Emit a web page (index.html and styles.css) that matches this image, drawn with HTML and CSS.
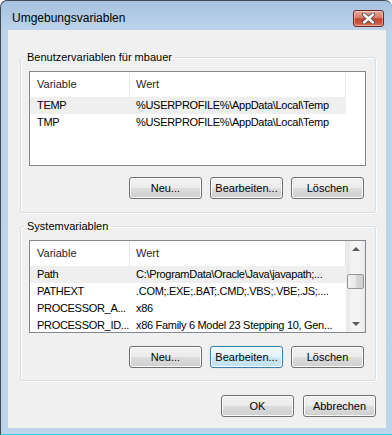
FILE: index.html
```html
<!DOCTYPE html>
<html lang="de">
<head>
  <meta charset="UTF-8">
  <title>Umgebungsvariablen</title>
  <link rel="stylesheet" href="styles.css">
</head>
<body>
  <div class="window">
    <div class="titlebar">
      <span class="title">Umgebungsvariablen</span>
      <button class="close" title="Schließen">
        <svg width="13" height="11" viewBox="0 0 13 11">
          <path d="M2 1.5 L11 9.5 M11 1.5 L2 9.5" stroke="#4a4a4a" stroke-width="4.2" stroke-linecap="round"/>
          <path d="M2 1.5 L11 9.5 M11 1.5 L2 9.5" stroke="#fff" stroke-width="2.4" stroke-linecap="round"/>
        </svg>
      </button>
    </div>

    <div class="client">
      <fieldset class="group first">
        <legend>Benutzervariablen für mbauer</legend>
        <div class="list user">
          <div class="cols">
            <div class="head">
              <span class="c1">Variable</span>
              <span class="c2">Wert</span>
            </div>
            <div class="row sel"><span class="c1">TEMP</span><span class="c2">%USERPROFILE%\AppData\Local\Temp</span></div>
            <div class="row"><span class="c1">TMP</span><span class="c2">%USERPROFILE%\AppData\Local\Temp</span></div>
          </div>
        </div>
        <div class="buttons">
          <button class="btn">Neu...</button>
          <button class="btn">Bearbeiten...</button>
          <button class="btn">Löschen</button>
        </div>
      </fieldset>

      <fieldset class="group second">
        <legend>Systemvariablen</legend>
        <div class="list system">
          <div class="cols">
            <div class="head">
              <span class="c1">Variable</span>
              <span class="c2">Wert</span>
            </div>
            <div class="row sel"><span class="c1">Path</span><span class="c2">C:\ProgramData\Oracle\Java\javapath;...</span></div>
            <div class="row"><span class="c1">PATHEXT</span><span class="c2">.COM;.EXE;.BAT;.CMD;.VBS;.VBE;.JS;....</span></div>
            <div class="row"><span class="c1">PROCESSOR_A...</span><span class="c2">x86</span></div>
            <div class="row"><span class="c1">PROCESSOR_ID...</span><span class="c2">x86 Family 6 Model 23 Stepping 10, Gen...</span></div>
          </div>
          <div class="scrollbar">
            <div class="arrow"><span class="up"></span></div>
            <div class="thumb"></div>
            <div class="track"></div>
            <div class="arrow"><span class="down"></span></div>
          </div>
        </div>
        <div class="buttons">
          <button class="btn">Neu...</button>
          <button class="btn focus">Bearbeiten...</button>
          <button class="btn">Löschen</button>
        </div>
      </fieldset>

      <div class="buttons dialog">
        <button class="btn">OK</button>
        <button class="btn">Abbrechen</button>
      </div>
    </div>
  </div>
</body>
</html>
```

FILE: styles.css
```css
body { margin: 0; background: #fff; font-family: "Liberation Sans", Arial, sans-serif; font-size: 11px; color: #000; }

.window {
  width: 392px; height: 435px; box-sizing: border-box;
  display: flex; flex-direction: column;
  padding: 0 6px 6px 7px;
  border-top: 1px solid #3f4a56; border-left: 1px solid #3f4a56; border-bottom: 1px solid #33ccee;
  border-radius: 7px 7px 0 0;
  background: linear-gradient(#a7c2df 0, #bcd3ea 30px, #bdd4eb);
}

.titlebar { height: 29px; display: flex; justify-content: space-between; align-items: flex-start; }
.title { margin: 10px 0 0 4px; font-size: 12px; line-height: 15px; color: #000; }
.close {
  margin: 9px 2px 0 0; width: 31px; height: 17px; padding: 0;
  display: flex; align-items: center; justify-content: center;
  border: 1px solid #6e2a22; border-radius: 3px;
  background: linear-gradient(#e9a899 0, #d67a68 45%, #c2432f 52%, #cd5c44 85%, #d9836c 100%);
  box-shadow: inset 0 0 0 1px rgba(255, 255, 255, 0.35);
}

.client {
  width: 378px; height: 398px; box-sizing: border-box;
  background: #f0f0f0; padding: 0 10px 0 12px;
  display: flex; flex-direction: column;
}

.group {
  margin: 0; padding: 0 0 13px; min-width: 0;
  border: 1px solid #d5dfe5; border-radius: 3px;
  box-shadow: inset 1px 1px 0 #fff, 1px 1px 0 #fff;
}
.group.first { margin-top: 20px; }
.group.second { margin-top: 6px; padding-bottom: 12px; }
.group legend { margin-left: 3px; padding: 0 3px; line-height: 14px; }

.list {
  margin: 7px 9px 0 8px; height: 95px; box-sizing: border-box;
  border: 1px solid #828790; background: #fff;
  display: flex; overflow: hidden;
  letter-spacing: -0.3px;
}
.list.system { height: 93px; }
.cols { flex: 1; min-width: 0; }

.head { display: flex; height: 25px; align-items: center; color: #1e1e1e; letter-spacing: 0; }
.head .c1 { border-right: 1px solid #e5e5e5; }
.head .c2 { border-right: 1px solid #e5e5e5; }
.head span { height: 25px; line-height: 25px; }

.c1 { width: 100px; box-sizing: border-box; padding-left: 7px; white-space: nowrap; overflow: hidden; }
.c2 { width: 216px; box-sizing: border-box; padding-left: 6px; white-space: nowrap; overflow: hidden; }

.row { display: flex; width: 316px; height: 17px; line-height: 17px; }
.row.sel { background: #efefef; }

.scrollbar {
  width: 18px; display: flex; flex-direction: column;
  background: linear-gradient(to right, #e6e6e6, #f4f4f4 30%, #f4f4f4 70%, #e9e9e9);
  border-left: 1px solid #ebebeb;
}
.arrow { height: 16px; display: flex; align-items: center; justify-content: center; }
.up { width: 0; height: 0; border-left: 4px solid transparent; border-right: 4px solid transparent; border-bottom: 4px solid #5a5a5a; }
.down { width: 0; height: 0; border-left: 4px solid transparent; border-right: 4px solid transparent; border-top: 4px solid #5a5a5a; }
.thumb {
  margin: 17px 1px 0 0; height: 15px; box-sizing: border-box;
  border: 1px solid #979797; border-radius: 2px;
  background: linear-gradient(to right, #f3f3f3, #e8e8e8 50%, #d8d8d8 51%, #d0d0d0);
}
.track { flex: 1; }

.buttons { display: flex; justify-content: flex-end; gap: 8px; margin: 11px 11px 0 0; }
.second .buttons { margin-top: 13px; }
.buttons.dialog { margin: 14px 0 0; gap: 9px; }

.btn {
  width: 73px; height: 22px; padding: 0;
  font-family: "Liberation Sans", Arial, sans-serif; font-size: 11px; color: #000;
  border: 1px solid #707070; border-radius: 3px;
  background: linear-gradient(#f2f2f2 0%, #ebebeb 50%, #dddddd 50%, #cfcfcf 100%);
  box-shadow: inset 0 0 0 1px #fcfcfc;
}
.btn.focus {
  border-color: #3c7fb1;
  background: linear-gradient(#f1f9fe 0%, #e2f2fc 50%, #cfe9fa 50%, #bfe0f6 100%);
  box-shadow: inset 0 0 0 1px #fff, 0 0 1px #7fc4ee;
}
```
